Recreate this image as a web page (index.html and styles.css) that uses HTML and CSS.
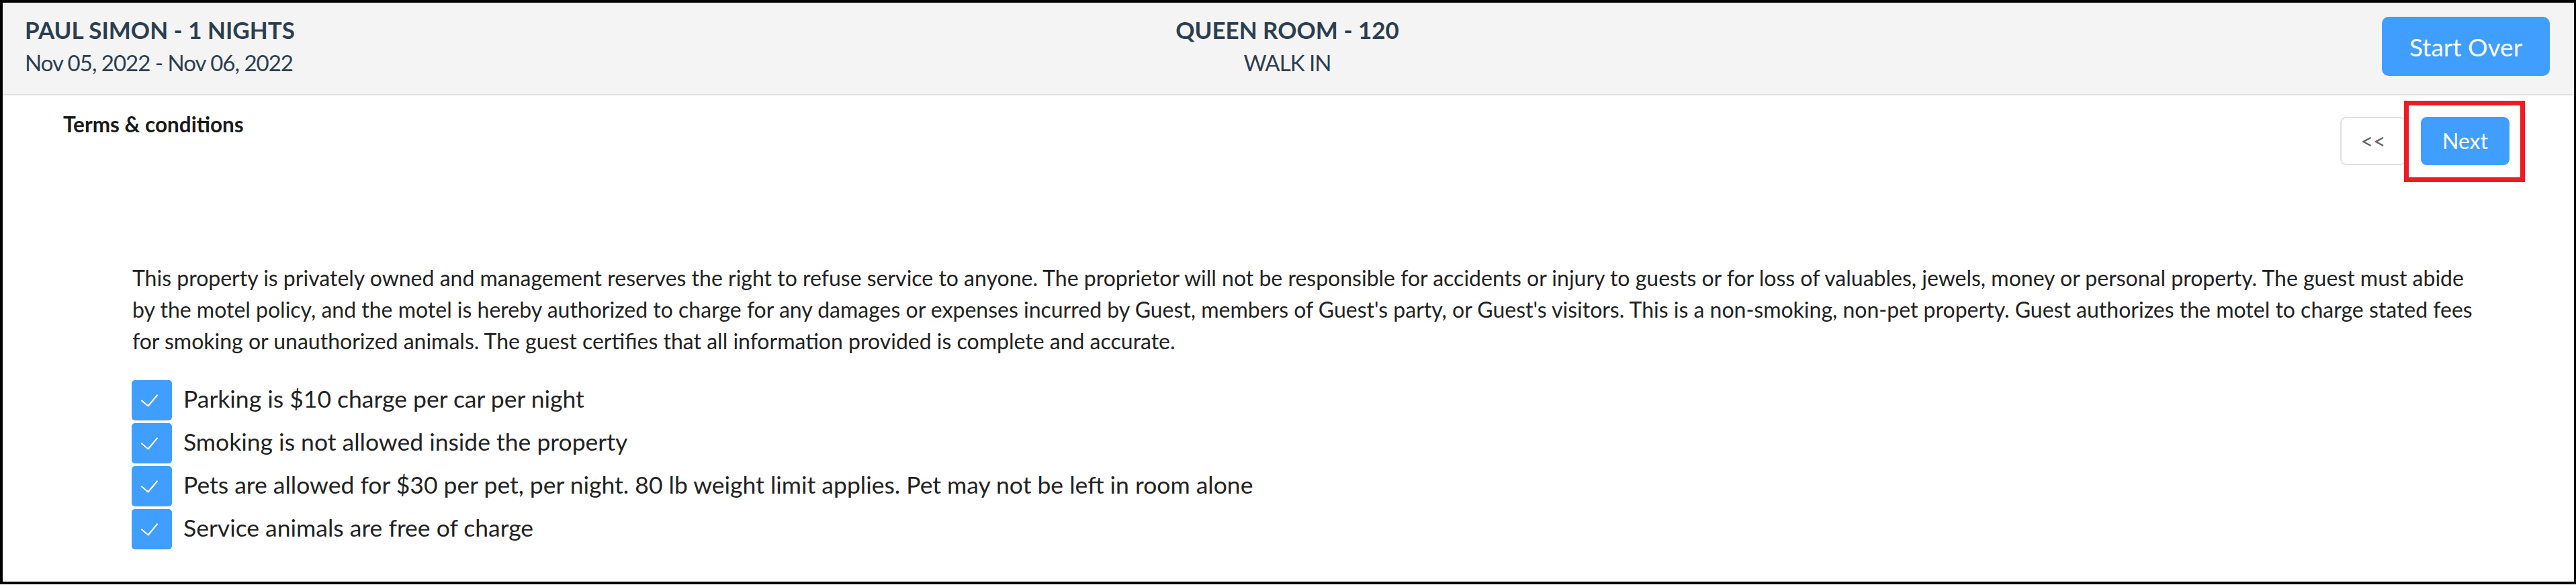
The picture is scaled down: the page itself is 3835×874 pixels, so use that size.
FILE: index.html
```html
<!DOCTYPE html>
<html lang="en">
<head>
<meta charset="utf-8">
<title>Check-in · Terms & conditions</title>
<link rel="stylesheet" href="styles.css">
</head>
<body>
<div class="frame">
  <header class="topbar">
    <div class="guest">
      <div class="strong">PAUL SIMON - 1 NIGHTS</div>
      <div class="sub">Nov 05, 2022 - Nov 06, 2022</div>
    </div>
    <div class="room">
      <div class="strong">QUEEN ROOM - 120</div>
      <div class="sub">WALK IN</div>
    </div>
    <div class="actions">
      <button class="btn btn-primary btn-large" type="button">Start Over</button>
    </div>
  </header>

  <main class="content">
    <div class="toolbar">
      <h2 class="section-title">Terms &amp; conditions</h2>
      <div class="pager">
        <button class="btn btn-default" type="button">&lt;&lt;</button>
        <button class="btn btn-primary btn-next" type="button">Next<span class="highlight"></span></button>
      </div>
    </div>

    <p class="terms">This property is privately owned and management reserves the right to refuse service to anyone. The proprietor will not be responsible for accidents or injury to guests or for loss of valuables, jewels, money or personal property. The guest must abide by the motel policy, and the motel is hereby authorized to charge for any damages or expenses incurred by Guest, members of Guest's party, or Guest's visitors. This is a non-smoking, non-pet property. Guest authorizes the motel to charge stated fees for smoking or unauthorized animals. The guest certifies that all information provided is complete and accurate.</p>

    <ul class="rules">
      <li class="rule">
        <span class="check"><svg viewBox="0 0 60 60" width="60" height="60"><path d="M15 30.5 L24.5 38.5 L38 22.5" /></svg></span>
        <span class="rule-text">Parking is $10 charge per car per night</span>
      </li>
      <li class="rule">
        <span class="check"><svg viewBox="0 0 60 60" width="60" height="60"><path d="M15 30.5 L24.5 38.5 L38 22.5" /></svg></span>
        <span class="rule-text">Smoking is not allowed inside the property</span>
      </li>
      <li class="rule">
        <span class="check"><svg viewBox="0 0 60 60" width="60" height="60"><path d="M15 30.5 L24.5 38.5 L38 22.5" /></svg></span>
        <span class="rule-text">Pets are allowed for $30 per pet, per night. 80 lb weight limit applies. Pet may not be left in room alone</span>
      </li>
      <li class="rule">
        <span class="check"><svg viewBox="0 0 60 60" width="60" height="60"><path d="M15 30.5 L24.5 38.5 L38 22.5" /></svg></span>
        <span class="rule-text">Service animals are free of charge</span>
      </li>
    </ul>
  </main>
</div>
</body>
</html>
```

FILE: styles.css
```css
* {
  box-sizing: border-box;
}

html,
body {
  margin: 0;
  padding: 0;
  background: #ffffff;
}

body {
  font-family: "Lato", "Liberation Sans", sans-serif;
  color: #222222;
}

.frame {
  height: 870px;
  border: 4px solid #000000;
  border-right-width: 3px;
  background: #ffffff;
  overflow: hidden;
}

/* ---------- top bar ---------- */
.topbar {
  display: grid;
  grid-template-columns: 1fr auto 1fr;
  align-items: start;
  padding: 16px 36px 22px 33px;
  background: #f4f4f4;
  border-bottom: 2px solid #e2e2e2;
  color: #2c3e50;
  font-size: 35px;
  line-height: 49px;
}

.strong {
  font-weight: 700;
}

.sub {
  font-size: 33px;
  letter-spacing: -1px;
}

.room {
  text-align: center;
}

.actions {
  justify-self: end;
  padding-top: 5px;
}

/* ---------- buttons ---------- */
.btn {
  font-family: inherit;
  border-radius: 9px;
  cursor: pointer;
  white-space: nowrap;
  padding: 0 32px;
  height: 72px;
  font-size: 32px;
  line-height: 1;
}

.btn-primary {
  background: #409eff;
  border: 2px solid #409eff;
  color: #ffffff;
}

.btn-default {
  background: #ffffff;
  border: 2px solid #dcdfe6;
  color: #606266;
  width: 98px;
  padding: 0;
}

.btn-large {
  height: 88px;
  width: 250px;
  padding: 0;
  font-size: 37px;
  border-radius: 10px;
}

.btn-next {
  position: relative;
  width: 132px;
  padding: 0;
}

/* callout frame drawn around the Next button */
.highlight {
  position: absolute;
  top: -26px;
  left: -27px;
  right: -25px;
  bottom: -27px;
  border: 7px solid #ec1c24;
  pointer-events: none;
}

/* ---------- content ---------- */
.content {
  padding: 24px 96px 0 90px;
}

.toolbar {
  display: flex;
  justify-content: space-between;
  align-items: flex-start;
}

.section-title {
  margin: 0;
  font-size: 31.5px;
  line-height: 38px;
  font-weight: 700;
  color: #1a1a1a;
}

.pager {
  display: flex;
  gap: 22px;
  margin-top: 8px;
}

.terms {
  margin: 144px 47px 0 103px;
  font-size: 32px;
  line-height: 47px;
  color: #222222;
}

.rules {
  list-style: none;
  margin: 35px 0 0 102px;
  padding: 0;
  display: flex;
  flex-direction: column;
  gap: 4px;
}

.rule {
  display: flex;
  align-items: center;
  gap: 17px;
  height: 60px;
  font-size: 35.5px;
  color: #222222;
}

.rule-text {
  padding-bottom: 6px;
}

.check {
  flex: none;
  width: 60px;
  height: 60px;
  border-radius: 5px;
  background: #409eff;
}

.check svg {
  display: block;
}

.check path {
  fill: none;
  stroke: #ffffff;
  stroke-width: 2.2;
  stroke-linecap: round;
  stroke-linejoin: round;
}
```
